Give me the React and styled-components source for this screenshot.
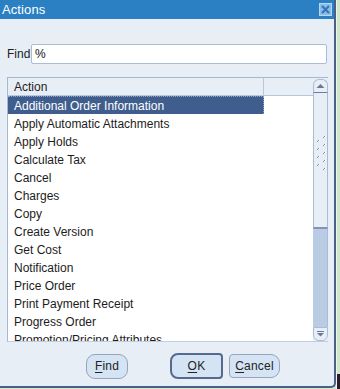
import React from "react";
import styled, { createGlobalStyle } from "styled-components";

const GlobalStyle = createGlobalStyle`
  html, body { margin: 0; padding: 0; }
  body {
    width: 340px;
    height: 389px;
    overflow: hidden;
    background: #d3e9cd;
    font-family: "Liberation Sans", Arial, sans-serif;
  }
`;

const Page = styled.div`
  display: flex;
  width: 340px;
  height: 389px;
`;

const Window = styled.div`
  width: 336px;
  height: 388px;
  box-sizing: border-box;
  background: #e8eef6;
  border-right: 2px solid #4b6089;
  border-bottom: 2px solid #4b6089;
  border-bottom-right-radius: 5px;
  display: flex;
  flex-direction: column;
`;

const SideStrip = styled.div`
  flex: 1;
  border-left: 1px solid #eef4f1;
  background: linear-gradient(to bottom, #cfe7c9 0, #cfe7c9 374px, #2a1b2c 374px);
`;

const TitleBar = styled.div`
  height: 19px;
  flex: none;
  background: #2b80c3;
  display: flex;
  align-items: center;
  justify-content: space-between;
  padding: 0 2px 0 2px;
`;

const Title = styled.span`
  color: #ffffff;
  font-size: 13px;
  letter-spacing: 0.1px;
`;

const CloseBox = styled.div`
  width: 13px;
  height: 13px;
  display: flex;
`;

const Body = styled.div`
  flex: 1;
  display: flex;
  flex-direction: column;
  padding: 25px 6px 0 7px;
`;

const FindRow = styled.div`
  display: flex;
  align-items: center;
  height: 20px;
  margin-right: 1px;
`;

const Label = styled.span`
  width: 24px;
  font-size: 12px;
  color: #222;
`;

const Input = styled.div`
  flex: 1;
  height: 20px;
  box-sizing: border-box;
  border: 1px solid #a9bdd6;
  border-radius: 2px;
  background: #ffffff;
  padding: 0 3px;
  font-size: 12px;
  line-height: 18px;
  color: #111;
`;

const ListBox = styled.div`
  margin-top: 13px;
  height: 265px;
  box-sizing: border-box;
  display: flex;
  border-top: 1px solid #a6b8ce;
  border-left: 1px solid #a6b8ce;
  border-bottom: 1px solid #c0cee0;
`;

const ListContent = styled.div`
  flex: 1;
  background: #ffffff;
  display: flex;
  flex-direction: column;
  overflow: hidden;
`;

const Header = styled.div`
  height: 18px;
  flex: none;
  box-sizing: border-box;
  display: flex;
  background: #e8eef6;
  border-bottom: 1px solid #b9c8da;
`;

const HeaderCell = styled.div`
  width: 256px;
  box-sizing: border-box;
  border-right: 1px solid #b9c8da;
  padding-left: 6px;
  font-size: 12px;
  line-height: 18px;
  color: #222;
`;

const Row = styled.div`
  height: 18px;
  flex: none;
  width: 256px;
  box-sizing: border-box;
  padding-left: 6px;
  font-size: 12px;
  line-height: 18px;
  white-space: nowrap;
  color: ${(p) => (p.$selected ? "#ffffff" : "#1c1c1c")};
  background: ${(p) => (p.$selected ? "#3f5e8e" : "transparent")};
  border-top: 1px dotted ${(p) => (p.$selected ? "#8fa3c2" : "transparent")};
  border-right: 1px dotted ${(p) => (p.$selected ? "#8fa3c2" : "transparent")};
`;

const Scrollbar = styled.div`
  width: 15px;
  flex: none;
  margin-top: 1px;
  display: flex;
  flex-direction: column;
`;

const ScrollButton = styled.div`
  height: 14px;
  flex: none;
  box-sizing: border-box;
  background: #e8eef6;
  border: 1px solid #a9bcd5;
  display: flex;
  align-items: center;
  justify-content: center;
  border-radius: ${(p) => (p.$up ? "6px 6px 0 0" : "0 0 6px 6px")};
  ${(p) => (p.$up ? "border-bottom: 1px solid #6c7c9a;" : "")}
`;

const Thumb = styled.div`
  height: 136px;
  flex: none;
  box-sizing: border-box;
  background: #e8eef6;
  border-left: 1px solid #a9bcd5;
  border-right: 1px solid #a9bcd5;
  border-bottom: 2px solid #8294b3;
  display: flex;
  align-items: center;
  justify-content: center;
  padding-bottom: 12px;
`;

const Track = styled.div`
  flex: 1;
  background: #bacce3;
  border-right: 1px solid #a9bcd5;
`;

const ButtonRow = styled.div`
  margin-top: 11px;
  height: 26px;
  display: flex;
  align-items: center;
  padding-left: 79px;
`;

const Button = styled.div`
  box-sizing: border-box;
  width: ${(p) => p.$w}px;
  height: ${(p) => p.$h}px;
  margin-left: ${(p) => p.$ml || 0}px;
  background: #d4e4f4;
  border: ${(p) => (p.$default ? "2px solid #56698e" : "1px solid #98a5b8")};
  border-radius: ${(p) => p.$radius};
  display: flex;
  align-items: center;
  justify-content: center;
  font-size: 12px;
  color: #222;
  letter-spacing: 0.2px;
`;

const U = styled.span`
  text-decoration: underline;
  text-underline-offset: 2px;
`;

const items = [
  "Additional Order Information",
  "Apply Automatic Attachments",
  "Apply Holds",
  "Calculate Tax",
  "Cancel",
  "Charges",
  "Copy",
  "Create Version",
  "Get Cost",
  "Notification",
  "Price Order",
  "Print Payment Receipt",
  "Progress Order",
  "Promotion/Pricing Attributes",
];

const CloseIcon = () => (
  <svg width="13" height="13" viewBox="0 0 13 13">
    <rect x="0.5" y="0.5" width="12" height="12" fill="#8cbde6" stroke="#b8d7f1" />
    <path d="M3 3 L10 10 M10 3 L3 10" stroke="#2f78bd" strokeWidth="2.2" />
  </svg>
);

const UpArrow = () => (
  <svg width="9" height="6" viewBox="0 0 9 6">
    <path d="M0.5 5 L4.5 1 L8.5 5 Z" fill="#6b7896" />
  </svg>
);

const DownArrow = () => (
  <svg width="9" height="6" viewBox="0 0 9 6">
    <rect x="1" y="0" width="7" height="1" fill="#6b7896" />
    <path d="M1 2 L8 2 L4.5 5.5 Z" fill="#6b7896" />
  </svg>
);

const Grip = () => {
  const marks = [];
  for (let i = 0; i < 9; i++) {
    const x = i % 2 === 0 ? 10 : 4;
    const y = 1 + i * 4;
    marks.push(
      <g key={i}>
        <rect x={x} y={y} width="1" height="1" fill="#8494b0" />
        <rect x={x - 1} y={y + 1} width="1" height="1" fill="#8494b0" />
        <rect x={x + 1} y={y} width="1" height="1" fill="#ffffff" />
      </g>
    );
  }
  return (
    <svg width="13" height="38" viewBox="0 0 13 38">
      {marks}
    </svg>
  );
};

export default function App() {
  return (
    <>
      <GlobalStyle />
      <Page>
        <Window>
          <TitleBar>
            <Title>Actions</Title>
            <CloseBox>
              <CloseIcon />
            </CloseBox>
          </TitleBar>
          <Body>
            <FindRow>
              <Label>Find</Label>
              <Input>%</Input>
            </FindRow>
            <ListBox>
              <ListContent>
                <Header>
                  <HeaderCell>Action</HeaderCell>
                </Header>
                {items.map((it, i) => (
                  <Row key={it} $selected={i === 0}>
                    {it}
                  </Row>
                ))}
              </ListContent>
              <Scrollbar>
                <ScrollButton $up>
                  <UpArrow />
                </ScrollButton>
                <Thumb>
                  <Grip />
                </Thumb>
                <Track />
                <ScrollButton>
                  <DownArrow />
                </ScrollButton>
              </Scrollbar>
            </ListBox>
            <ButtonRow>
              <Button $w={42} $h={25} $radius="9px">
                <span><U>F</U>ind</span>
              </Button>
              <Button $w={53} $h={26} $ml={42} $default $radius="8px 4px 4px 8px">
                <span><U>O</U>K</span>
              </Button>
              <Button $w={51} $h={24} $ml={6} $radius="4px 9px 9px 4px">
                <span><U>C</U>ancel</span>
              </Button>
            </ButtonRow>
          </Body>
        </Window>
        <SideStrip />
      </Page>
    </>
  );
}
